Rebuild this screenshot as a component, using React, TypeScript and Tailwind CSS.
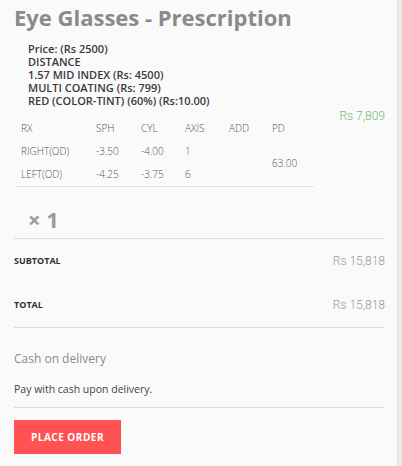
import React from "react";

const rows = [
  { rx: "RIGHT(OD)", sph: "-3.50", cyl: "-4.00", axis: "1" },
  { rx: "LEFT(OD)", sph: "-4.25", cyl: "-3.75", axis: "6" },
];

export default function App() {
  return (
    <div className="w-[402px] h-[466px] bg-[#fafafa] flex overflow-hidden" style={{ fontFamily: '"Open Sans", sans-serif' }}>
      <div className="w-[395px] pl-[14px] pr-[10px] pt-[2px] flex flex-col">
        <h1 className="text-[22px] leading-[30px] font-bold text-[#8a8a8a]">Eye Glasses - Prescription</h1>
        <div className="pl-[14px] mt-[10px] text-[11px] leading-[13px] font-semibold text-[#3a3a3a]">
          <div>Price: (Rs 2500)</div>
          <div>DISTANCE</div>
          <div>1.57 MID INDEX (Rs: 4500)</div>
          <div>MULTI COATING (Rs: 799)</div>
          <div>RED (COLOR-TINT) (60%) (Rs:10.00)</div>
        </div>
        <div className="flex justify-end mt-[2px] text-[12px] leading-[14px] text-[#6cbf6c]" style={{ fontFamily: 'Roboto, sans-serif', fontWeight: 300 }}>
          Rs 7,809
        </div>
        <div className="w-[299px] ml-[1px] mt-[-7px] border-b border-[#e2e2e2] text-[10px] text-[#555] font-light">
          <div className="flex h-[24px] items-center">
            <div className="w-[81px] pl-[6px]">RX</div>
            <div className="w-[45px]">SPH</div>
            <div className="w-[44px]">CYL</div>
            <div className="w-[44px]">AXIS</div>
            <div className="w-[43px]">ADD</div>
            <div>PD</div>
          </div>
          <div className="flex">
            <div className="flex flex-col">
              {rows.map((r) => (
                <div key={r.rx} className="flex h-[23px] items-center">
                  <div className="w-[81px] pl-[6px]">{r.rx}</div>
                  <div className="w-[45px]">{r.sph}</div>
                  <div className="w-[44px]">{r.cyl}</div>
                  <div className="w-[44px]">{r.axis}</div>
                  <div className="w-[43px]"></div>
                </div>
              ))}
            </div>
            <div className="flex items-center">63.00</div>
          </div>
        </div>
        <div className="pl-[14px] mt-[17px] text-[22px] leading-[30px] font-bold text-[#9a9a9a]">× 1</div>
        <div className="mt-[4px] border-t border-[#dedede] w-[371px]" />
        <div className="w-[371px] flex justify-between items-center h-[44px]">
          <span className="text-[9px] font-bold text-[#333]">SUBTOTAL</span>
          <span className="text-[12px] text-[#999]" style={{ fontFamily: 'Roboto, sans-serif', fontWeight: 300 }}>Rs 15,818</span>
        </div>
        <div className="w-[371px] flex justify-between items-center h-[44px]">
          <span className="text-[9px] font-bold text-[#333]">TOTAL</span>
          <span className="text-[12px] text-[#999]" style={{ fontFamily: 'Roboto, sans-serif', fontWeight: 300 }}>Rs 15,818</span>
        </div>
        <div className="border-t border-[#dedede] w-[371px]" />
        <div className="mt-[23px] text-[12px] leading-[16px] text-[#8a8a8a]">Cash on delivery</div>
        <div className="mt-[15px] text-[10.5px] leading-[14px] text-[#444]">Pay with cash upon delivery.</div>
        <div className="mt-[11px] border-t border-[#dedede] w-[371px]" />
        <div className="mt-[12px]">
          <button className="w-[107px] h-[34px] bg-[#ff5252] text-white text-[10px] font-bold tracking-[0.5px]">PLACE ORDER</button>
        </div>
      </div>
      <div className="w-[2px]" />
      <div className="w-[5px] bg-[#ececec] border-l border-[#e4e4e4]" />
    </div>
  );
}
